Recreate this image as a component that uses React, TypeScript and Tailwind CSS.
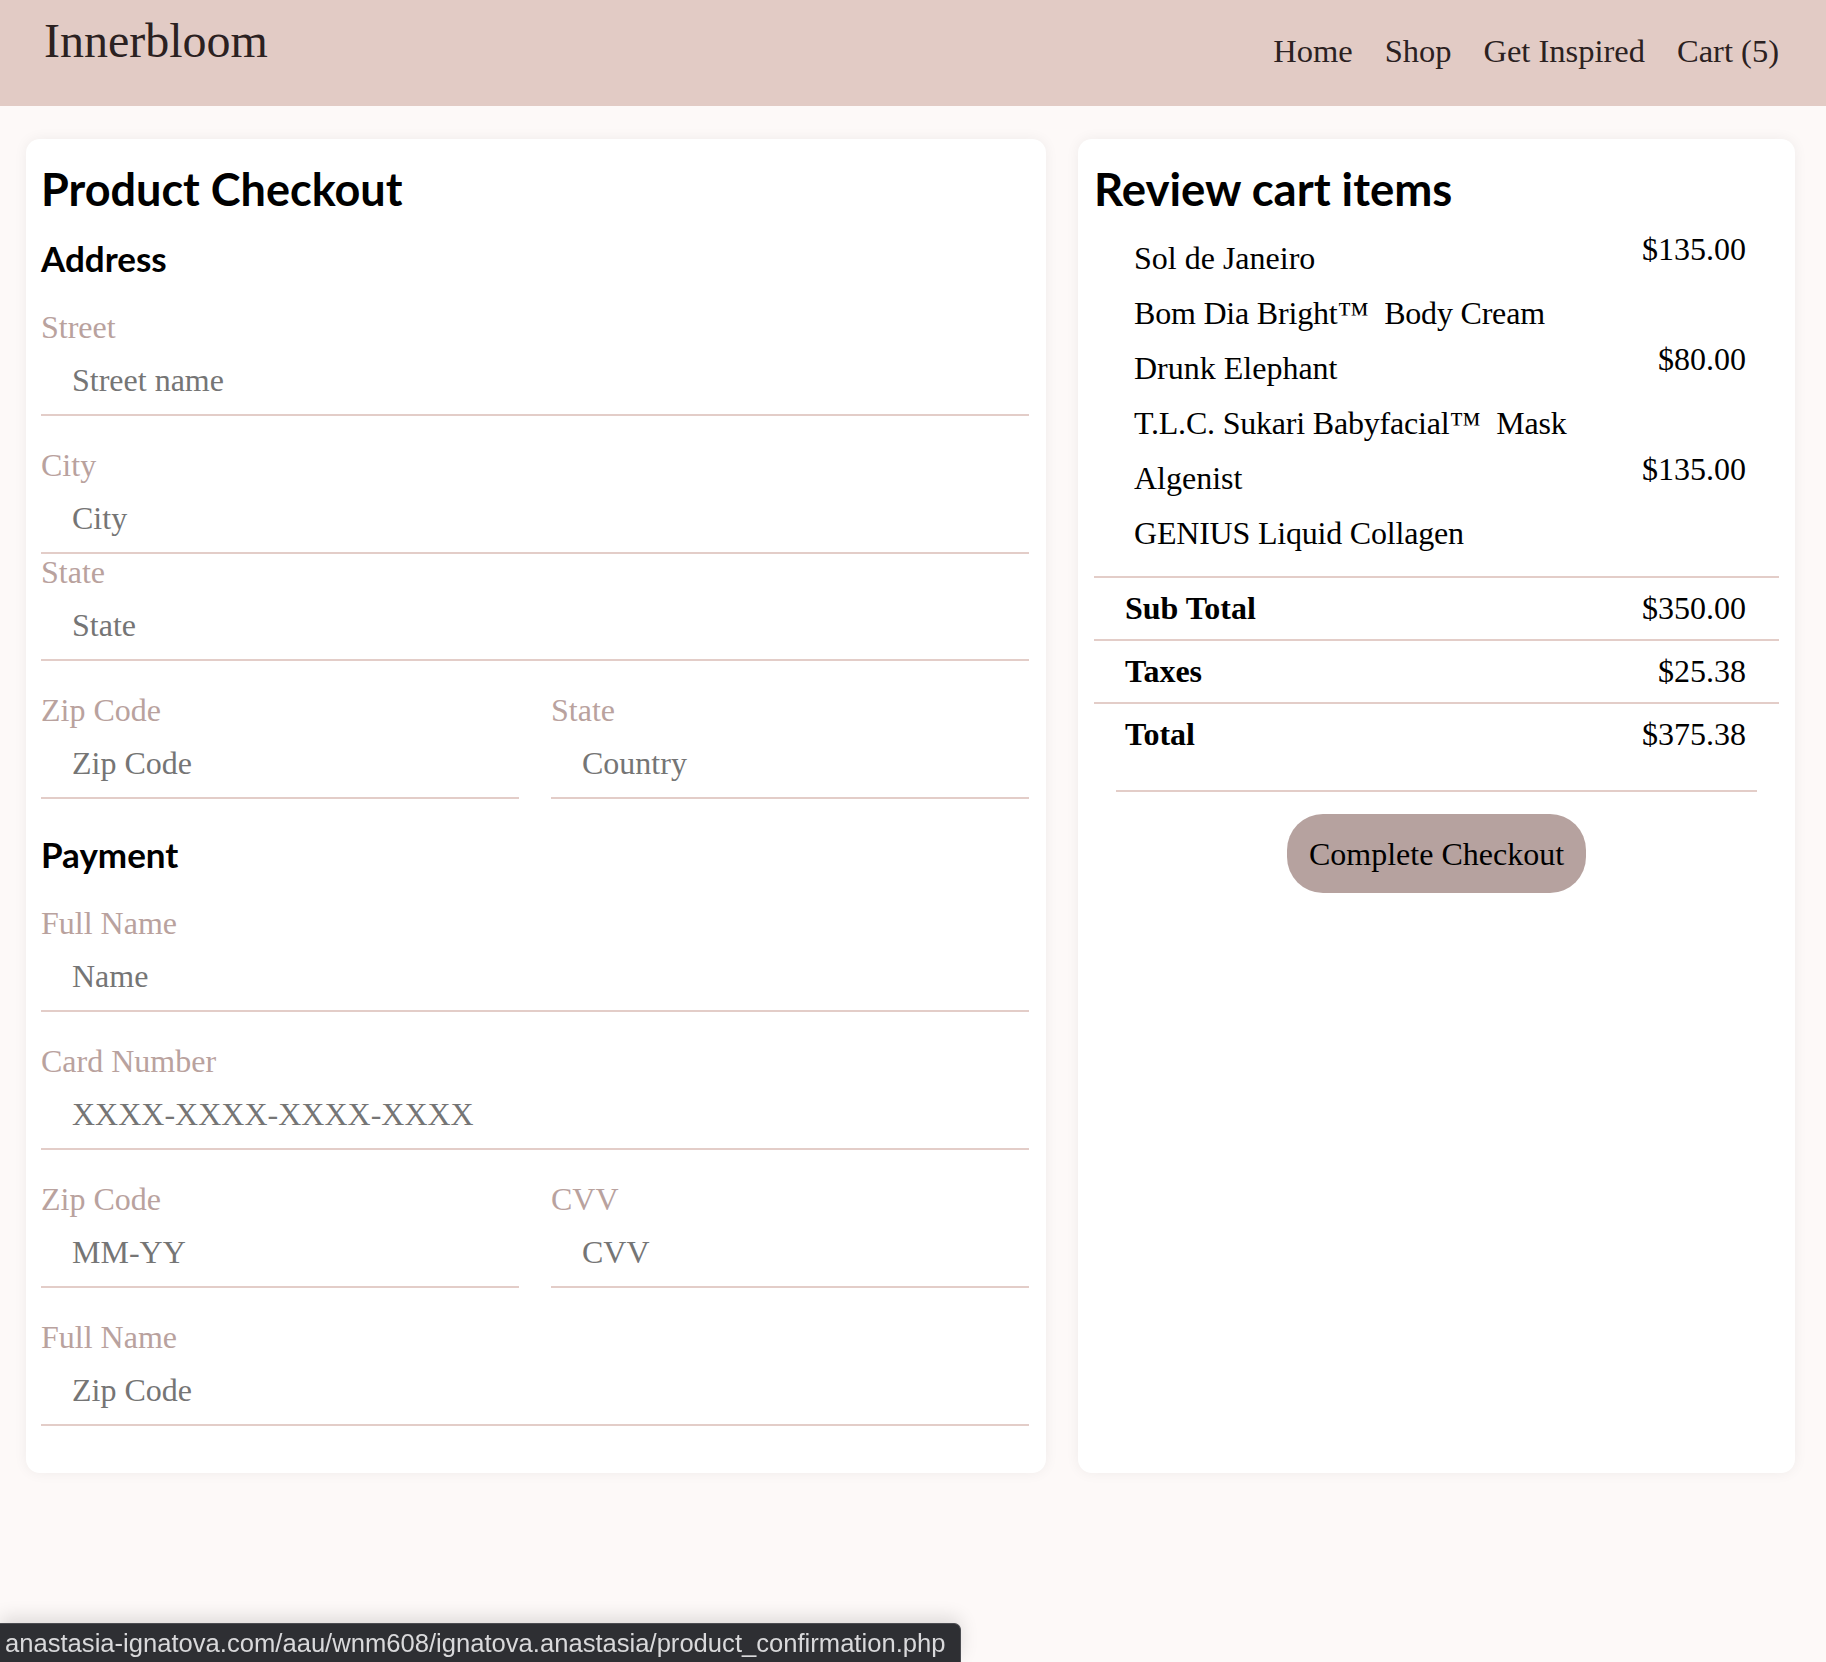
import type { ReactNode } from 'react';

const serif = "font-['Liberation_Serif','Times_New_Roman',serif]";
const heading = "font-['Lato','Open_Sans',sans-serif] font-bold text-black";

interface FieldProps {
  label: string;
  placeholder: string;
  className?: string;
}

function Field({ label, placeholder, className = '' }: FieldProps) {
  return (
    <div className={`flex flex-col ${className}`}>
      <label className={`${serif} text-[32px] leading-[37px] text-[#b9a29e]`}>{label}</label>
      <input
        type="text"
        placeholder={placeholder}
        className={`${serif} h-[70px] w-full border-b-2 border-[#e3cdc8] bg-transparent px-[31px] text-[32px] text-[#333] outline-none placeholder:text-[#757575]`}
      />
    </div>
  );
}

function SectionTitle({ children, className = '' }: { children: ReactNode; className?: string }) {
  return <h2 className={`${heading} text-[35px] leading-[40px] ${className}`}>{children}</h2>;
}

const cartItems = [
  { brand: 'Sol de Janeiro', name: 'Bom Dia Bright™  Body Cream', price: '$135.00' },
  { brand: 'Drunk Elephant', name: 'T.L.C. Sukari Babyfacial™  Mask', price: '$80.00' },
  { brand: 'Algenist', name: 'GENIUS Liquid Collagen', price: '$135.00' },
];

const summary = [
  { label: 'Sub Total', value: '$350.00' },
  { label: 'Taxes', value: '$25.38' },
  { label: 'Total', value: '$375.38' },
];

export default function App() {
  return (
    <div className="min-h-screen bg-[#fdf9f8] pb-[188px]">
      <header className="flex h-[106px] items-start justify-between bg-[#e2cbc5] pl-[44px] pr-[47px] text-[#2b2121]">
        <div className={`${serif} pt-[14px] text-[48px] leading-[54px]`}>Innerbloom</div>
        <nav className={`${serif} flex gap-[32px] pt-[33px] text-[32.5px] leading-[37px]`}>
          <a href="#">Home</a>
          <a href="#">Shop</a>
          <a href="#">Get Inspired</a>
          <a href="#">Cart (5)</a>
        </nav>
      </header>

      <main className="flex items-stretch gap-[32px] pl-[26px] pt-[33px]">
        <section className="w-[1020px] rounded-[14px] bg-white pb-[47px] pl-[15px] pr-[17px] pt-[24px] shadow-[0_0_14px_rgba(0,0,0,0.06)]">
          <h1 className={`${heading} text-[45px] leading-[52px]`}>Product Checkout</h1>

          <SectionTitle className="mt-[23px]">Address</SectionTitle>
          <Field className="mt-[31px]" label="Street" placeholder="Street name" />
          <Field className="mt-[31px]" label="City" placeholder="City" />
          <Field label="State" placeholder="State" />
          <div className="mt-[31px] grid grid-cols-2 gap-[32px]">
            <Field label="Zip Code" placeholder="Zip Code" />
            <Field label="State" placeholder="Country" />
          </div>

          <SectionTitle className="mt-[35px]">Payment</SectionTitle>
          <Field className="mt-[31px]" label="Full Name" placeholder="Name" />
          <Field className="mt-[31px]" label="Card Number" placeholder="XXXX-XXXX-XXXX-XXXX" />
          <div className="mt-[31px] grid grid-cols-2 gap-[32px]">
            <Field label="Zip Code" placeholder="MM-YY" />
            <Field label="CVV" placeholder="CVV" />
          </div>
          <Field className="mt-[31px]" label="Full Name" placeholder="Zip Code" />
        </section>

        <section className="w-[717px] rounded-[14px] bg-white px-[16px] pt-[24px] shadow-[0_0_14px_rgba(0,0,0,0.06)]">
          <h1 className={`${heading} text-[45.5px] leading-[52px]`}>Review cart items</h1>

          <div className={`${serif} mt-[16px] mb-[15px] text-[32px] text-black`}>
            {cartItems.map((item) => (
              <div key={item.brand} className="flex items-start justify-between pl-[40px] pr-[33px]">
                <div className="leading-[55px]">
                  <p>{item.brand}</p>
                  <p className="whitespace-pre tracking-[-0.2px]">{item.name}</p>
                </div>
                <span className="leading-[37px]">{item.price}</span>
              </div>
            ))}
          </div>

          <div className={`${serif} text-[32px] leading-[37px] text-black`}>
            {summary.map((row) => (
              <div
                key={row.label}
                className="flex h-[63px] items-center justify-between border-t-2 border-[#e3cdc8] pl-[31px] pr-[33px]"
              >
                <span className="font-bold">{row.label}</span>
                <span>{row.value}</span>
              </div>
            ))}
          </div>

          <hr className="mx-[22px] mt-[25px] border-t-2 border-[#e3cdc8]" />

          <div className="mt-[22px] flex justify-center">
            <button
              type="button"
              className={`${serif} h-[79px] rounded-[36px] bg-[#b6a29f] px-[22px] text-[32px] text-black`}
            >
              Complete Checkout
            </button>
          </div>
        </section>
      </main>

      <div className="fixed bottom-0 left-0 flex h-[39px] w-[961px] items-center rounded-tr-[7px] border-r border-t border-[#4c4d52] bg-[#2e2f33] pl-[5px] shadow-[0_-6px_18px_rgba(0,0,0,0.12)]">
        <span className="font-['Liberation_Sans',Arial,sans-serif] text-[25.6px] leading-[30px] text-[#d9d9db]">
          anastasia-ignatova.com/aau/wnm608/ignatova.anastasia/product_confirmation.php
        </span>
      </div>
    </div>
  );
}
